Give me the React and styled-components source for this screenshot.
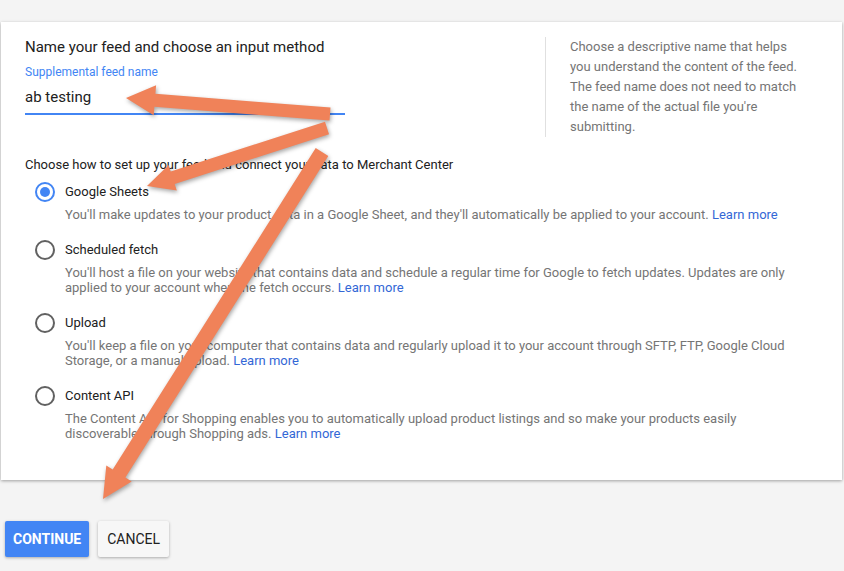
import styled, { createGlobalStyle } from 'styled-components';

const GlobalStyle = createGlobalStyle`
    body {
        margin: 0;
        background: #f4f4f4;
        font-family: Roboto, "Liberation Sans", Arial, sans-serif;
    }
`;

const Page = styled.div`
    position: relative;
    width: 844px;
    height: 571px;
    padding-top: 22px;
    box-sizing: border-box;
    overflow: hidden;
`;

const Card = styled.div`
    margin-left: 1px;
    width: 841px;
    height: 458px;
    box-sizing: border-box;
    background: #fff;
    box-shadow: 0 1px 3px rgba(0, 0, 0, 0.35);
    padding: 15px 30px 0 24px;
`;

const Top = styled.div`
    display: flex;
    align-items: flex-start;
`;

const NameColumn = styled.div`
    width: 520px;
    flex-shrink: 0;
`;

const Heading = styled.div`
    font-size: 15px;
    line-height: 20px;
    color: #212121;
`;

const FieldLabel = styled.div`
    margin-top: 7px;
    font-size: 12px;
    line-height: 16px;
    color: #4285f4;
`;

const Field = styled.div`
    width: 320px;
    padding: 7px 0 6px;
    border-bottom: 2px solid #4285f4;
    font-size: 15px;
    line-height: 20px;
    color: #212121;
`;

const Help = styled.div`
    flex-shrink: 0;
    border-left: 1px solid #e0e0e0;
    padding-left: 24px;
    width: 236px;
    font-size: 13px;
    line-height: 20px;
    color: #757575;
`;

const Prompt = styled.div`
    margin-top: 18px;
    font-size: 13px;
    line-height: 20px;
    color: #212121;
`;

const Options = styled.div`
    margin-top: 7px;
    display: flex;
    flex-direction: column;
    gap: 18px;
`;

const Option = styled.div`
    display: grid;
    grid-template-columns: 40px 1fr;
`;

const Radio = styled.span`
    width: 20px;
    height: 20px;
    margin-left: 10px;
    box-sizing: border-box;
    border-radius: 50%;
    border: 2px solid ${p => (p.checked ? '#4285f4' : '#616161')};
    display: flex;
    align-items: center;
    justify-content: center;

    &::after {
        content: '';
        width: 10px;
        height: 10px;
        border-radius: 50%;
        background: ${p => (p.checked ? '#4285f4' : 'transparent')};
    }
`;

const OptionTitle = styled.div`
    font-size: 13px;
    line-height: 20px;
    color: #212121;
`;

const OptionText = styled.div`
    grid-column: 2;
    margin-top: 5px;
    max-width: 740px;
    font-size: 13px;
    line-height: 15px;
    color: #757575;
`;

const Link = styled.a`
    color: #3367d6;
    text-decoration: none;
`;

const Actions = styled.div`
    display: flex;
    gap: 9px;
    margin: 41px 0 0 5px;
`;

const Button = styled.button`
    height: 36px;
    padding: 0 ${p => (p.primary ? 8 : 9)}px;
    border: none;
    border-radius: 2px;
    font-family: Roboto, "Liberation Sans", Arial, sans-serif;
    font-size: 14px;
    font-weight: ${p => (p.primary ? 700 : 400)};
    color: ${p => (p.primary ? '#fff' : '#212121')};
    background: ${p => (p.primary ? '#4285f4' : '#f7f7f7')};
    box-shadow: 0 1px 3px rgba(0, 0, 0, 0.3);
`;

const Overlay = styled.svg`
    position: absolute;
    left: 0;
    top: 0;
    pointer-events: none;
    filter: drop-shadow(1px 2px 2px rgba(0, 0, 0, 0.35));
`;

const OPTIONS = [
    {
        title: 'Google Sheets',
        text: "You'll make updates to your product data in a Google Sheet, and they'll automatically be applied to your account.",
        checked: true
    },
    {
        title: 'Scheduled fetch',
        text: "You'll host a file on your website that contains data and schedule a regular time for Google to fetch updates. Updates are only applied to your account when the fetch occurs."
    },
    {
        title: 'Upload',
        text: "You'll keep a file on your computer that contains data and regularly upload it to your account through SFTP, FTP, Google Cloud Storage, or a manual upload."
    },
    {
        title: 'Content API',
        text: 'The Content API for Shopping enables you to automatically upload product listings and so make your products easily discoverable through Shopping ads.'
    }
];

// start, tip, shaft width, head width, head length
const ARROWS = [
    [330, 114, 126, 98, 13, 30, 29],
    [327, 128, 147, 186, 13, 27, 27],
    [322, 152, 103, 499, 15, 30, 30]
];

function arrowPoints([x1, y1, x2, y2, w, hw, hl]) {
    const len = Math.hypot(x2 - x1, y2 - y1);
    const ux = (x2 - x1) / len;
    const uy = (y2 - y1) / len;
    const px = -uy;
    const py = ux;
    const bx = x2 - ux * hl;
    const by = y2 - uy * hl;
    const pts = [
        [x1 + px * w / 2, y1 + py * w / 2],
        [bx + px * w / 2, by + py * w / 2],
        [bx + px * hw / 2, by + py * hw / 2],
        [x2, y2],
        [bx - px * hw / 2, by - py * hw / 2],
        [bx - px * w / 2, by - py * w / 2],
        [x1 - px * w / 2, y1 - py * w / 2]
    ];
    return pts.map(p => p.map(n => n.toFixed(1)).join(',')).join(' ');
}

function App() {
    return (
        <Page>
            <GlobalStyle />
            <Card>
                <Top>
                    <NameColumn>
                        <Heading>Name your feed and choose an input method</Heading>
                        <FieldLabel>Supplemental feed name</FieldLabel>
                        <Field>ab testing</Field>
                    </NameColumn>
                    <Help>
                        Choose a descriptive name that helps you understand the content of the feed.
                        The feed name does not need to match the name of the actual file you're submitting.
                    </Help>
                </Top>
                <Prompt>Choose how to set up your feed and connect your data to Merchant Center</Prompt>
                <Options>
                    {OPTIONS.map(option => (
                        <Option key={option.title}>
                            <Radio checked={option.checked} />
                            <OptionTitle>{option.title}</OptionTitle>
                            <OptionText>
                                {option.text} <Link href="#">Learn more</Link>
                            </OptionText>
                        </Option>
                    ))}
                </Options>
            </Card>
            <Actions>
                <Button primary>CONTINUE</Button>
                <Button>CANCEL</Button>
            </Actions>
            <Overlay width="844" height="571">
                {ARROWS.map((arrow, i) => (
                    <polygon key={i} points={arrowPoints(arrow)} fill="#f08259" />
                ))}
            </Overlay>
        </Page>
    );
}

export default App;
